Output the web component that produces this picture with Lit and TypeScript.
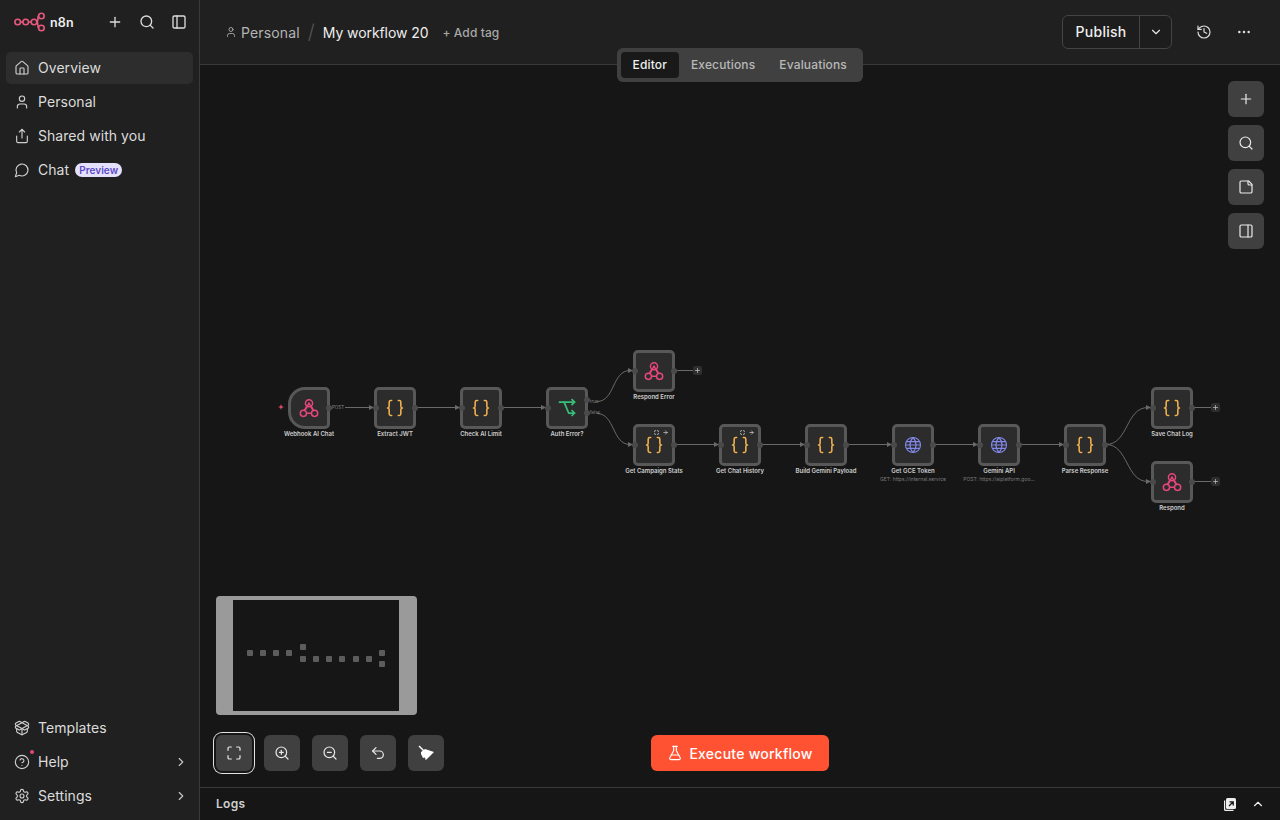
import { LitElement, html, css, svg, nothing } from "lit";
import { customElement } from "lit/decorators.js";

const I: Record<string, unknown> = {
  house: svg`<path d="M15 21v-8a1 1 0 0 0-1-1h-4a1 1 0 0 0-1 1v8"/><path d="M3 10a2 2 0 0 1 .709-1.528l7-5.999a2 2 0 0 1 2.582 0l7 5.999A2 2 0 0 1 21 10v9a2 2 0 0 1-2 2H5a2 2 0 0 1-2-2z"/>`,
  user: svg`<path d="M19 21v-2a4 4 0 0 0-4-4H9a4 4 0 0 0-4 4v2"/><circle cx="12" cy="7" r="4"/>`,
  share: svg`<path d="M12 2v13"/><path d="m16 6-4-4-4 4"/><path d="M4 12v8a2 2 0 0 0 2 2h12a2 2 0 0 0 2-2v-8"/>`,
  chat: svg`<path d="M7.9 20A9 9 0 1 0 4 16.1L2 22Z"/>`,
  pkg: svg`<path d="M12 22v-9"/><path d="M15.17 2.21a1.67 1.67 0 0 1 1.63 0L21 4.57a1.93 1.93 0 0 1 0 3.36L8.82 14.79a1.655 1.655 0 0 1-1.64 0L3 12.43a1.93 1.93 0 0 1 0-3.36z"/><path d="M20 13v3.87a2.06 2.06 0 0 1-1.11 1.83l-6 3.08a1.93 1.93 0 0 1-1.78 0l-6-3.08A2.06 2.06 0 0 1 4 16.87V13"/><path d="M21 12.43a1.93 1.93 0 0 0 0-3.36L8.83 2.2a1.64 1.64 0 0 0-1.63 0L3 4.57a1.93 1.93 0 0 0 0 3.36l12.18 6.86a1.636 1.636 0 0 0 1.63 0z"/>`,
  help: svg`<circle cx="12" cy="12" r="10"/><path d="M9.09 9a3 3 0 0 1 5.83 1c0 2-3 3-3 3"/><path d="M12 17h.01"/>`,
  gear: svg`<path d="M12.22 2h-.44a2 2 0 0 0-2 2v.18a2 2 0 0 1-1 1.73l-.43.25a2 2 0 0 1-2 0l-.15-.08a2 2 0 0 0-2.73.73l-.22.38a2 2 0 0 0 .73 2.73l.15.1a2 2 0 0 1 1 1.72v.51a2 2 0 0 1-1 1.74l-.15.09a2 2 0 0 0-.73 2.73l.22.38a2 2 0 0 0 2.73.73l.15-.08a2 2 0 0 1 2 0l.43.25a2 2 0 0 1 1 1.73V20a2 2 0 0 0 2 2h.44a2 2 0 0 0 2-2v-.18a2 2 0 0 1 1-1.73l.43-.25a2 2 0 0 1 2 0l.15.08a2 2 0 0 0 2.73-.73l.22-.39a2 2 0 0 0-.73-2.73l-.15-.08a2 2 0 0 1-1-1.74v-.5a2 2 0 0 1 1-1.74l.15-.09a2 2 0 0 0 .73-2.73l-.22-.38a2 2 0 0 0-2.73-.73l-.15.08a2 2 0 0 1-2 0l-.43-.25a2 2 0 0 1-1-1.73V4a2 2 0 0 0-2-2z"/><circle cx="12" cy="12" r="3"/>`,
  plus: svg`<path d="M5 12h14"/><path d="M12 5v14"/>`,
  search: svg`<circle cx="11" cy="11" r="8"/><path d="m21 21-4.3-4.3"/>`,
  pleft: svg`<rect width="18" height="18" x="3" y="3" rx="2"/><path d="M9 3v18"/>`,
  pright: svg`<rect width="18" height="18" x="3" y="3" rx="2"/><path d="M15 3v18"/>`,
  cright: svg`<path d="m9 18 6-6-6-6"/>`,
  cdown: svg`<path d="m6 9 6 6 6-6"/>`,
  cup: svg`<path d="m18 15-6-6-6 6"/>`,
  dots: svg`<circle cx="12" cy="12" r="1"/><circle cx="19" cy="12" r="1"/><circle cx="5" cy="12" r="1"/>`,
  history: svg`<path d="M3 12a9 9 0 1 0 9-9 9.75 9.75 0 0 0-6.74 2.74L3 8"/><path d="M3 3v5h5"/><path d="M12 7v5l4 2"/>`,
  note: svg`<path d="M16 3H5a2 2 0 0 0-2 2v14a2 2 0 0 0 2 2h14a2 2 0 0 0 2-2V8Z"/><path d="M15 3v4a2 2 0 0 0 2 2h4"/>`,
  fit: svg`<path d="M8 3H5a2 2 0 0 0-2 2v3"/><path d="M21 8V5a2 2 0 0 0-2-2h-3"/><path d="M3 16v3a2 2 0 0 0 2 2h3"/><path d="M16 21h3a2 2 0 0 0 2-2v-3"/>`,
  arrow: svg`<path d="M4 12h16"/><path d="m12 4 8 8-8 8"/>`,
  zin: svg`<circle cx="11" cy="11" r="8"/><path d="m21 21-4.3-4.3"/><path d="M11 8v6"/><path d="M8 11h6"/>`,
  zout: svg`<circle cx="11" cy="11" r="8"/><path d="m21 21-4.3-4.3"/><path d="M8 11h6"/>`,
  undo: svg`<path d="M9 14 4 9l5-5"/><path d="M4 9h10.5a5.5 5.5 0 0 1 5.5 5.5a5.5 5.5 0 0 1-5.5 5.5H11"/>`,
  flask: svg`<path d="M14 2v6a2 2 0 0 0 .245.96l5.51 10.08A2 2 0 0 1 18 22H6a2 2 0 0 1-1.755-2.96l5.51-10.08A2 2 0 0 0 10 8V2"/><path d="M6.453 15h11.094"/><path d="M8.5 2h7"/>`,
  webhook: svg`<circle cx="12" cy="6.8" r="3.9"/><circle cx="5.9" cy="17.8" r="3.4"/><circle cx="18.1" cy="17.8" r="3.4"/><path d="M9.7 10 6.800 14.800"/><path d="M14.300 10l2.900 4.800"/><path d="M9.500 17.800h5"/><path d="M12 6.800 8.200 13.500"/><path d="M12 6.800l3.800 6.700"/>`,
  code: svg`<path d="M8 3H7a2 2 0 0 0-2 2v5a2 2 0 0 1-2 2 2 2 0 0 1 2 2v5c0 1.100.9 2 2 2h1"/><path d="M16 21h1a2 2 0 0 0 2-2v-5c0-1.100.9-2 2-2a2 2 0 0 1-2-2V5a2 2 0 0 0-2-2h-1"/>`,
  globe: svg`<circle cx="12" cy="12" r="10"/><path d="M12 2a14.500 14.500 0 0 0 0 20 14.500 14.500 0 0 0 0-20"/><path d="M2 12h20"/><path d="M3.500 7.500h17"/><path d="M3.500 16.500h17"/>`,
  iff: svg`<path d="M3 5H21"/><path d="M8.500 5 14 18h7"/><path d="m18 2 3 3-3 3"/><path d="m18 15 3 3-3 3"/>`,
};

const icon = (name: string, cls = "") =>
  html`<svg class="ic ${cls}" viewBox="0 0 24 24" fill="none" stroke="currentColor" stroke-linecap="round" stroke-linejoin="round">${I[name]}</svg>`;

type Kind = "webhook" | "code" | "globe" | "iff";
interface N {
  x: number; y: number; kind: Kind; label: string; sub?: string;
  trigger?: boolean; badges?: boolean; add?: boolean;
}
// Canvas coordinates: origin at the canvas top-left (200, 65)
const NODES: N[] = [
  { x: 88, y: 322, kind: "webhook", label: "Webhook AI Chat", trigger: true },
  { x: 174, y: 322, kind: "code", label: "Extract JWT" },
  { x: 260, y: 322, kind: "code", label: "Check AI Limit" },
  { x: 346, y: 322, kind: "iff", label: "Auth Error?" },
  { x: 433, y: 285, kind: "webhook", label: "Respond Error", add: true },
  { x: 433, y: 359, kind: "code", label: "Get Campaign Stats", badges: true },
  { x: 519, y: 359, kind: "code", label: "Get Chat History", badges: true },
  { x: 605, y: 359, kind: "code", label: "Build Gemini Payload" },
  { x: 692, y: 359, kind: "globe", label: "Get GCE Token", sub: "GET: https://internal.service" },
  { x: 778, y: 359, kind: "globe", label: "Gemini API", sub: "POST: https://aiplatform.goo..." },
  { x: 864, y: 359, kind: "code", label: "Parse Response" },
  { x: 951, y: 322, kind: "code", label: "Save Chat Log", add: true },
  { x: 951, y: 396, kind: "webhook", label: "Respond", add: true },
];

const W = 42;
const seg = (x1: number, y1: number, x2: number, y2: number) => {
  const d = (x2 - x1) * 0.5;
  return y1 === y2
    ? `M${x1} ${y1}H${x2 - 3}`
    : `M${x1} ${y1}C${x1 + d} ${y1} ${x2 - d - 3} ${y2} ${x2 - 3} ${y2}`;
};
// [from x, from y, to x, to y], values are port centres
const EDGES: number[][] = [
  [145, 342.5, 174, 342.5],
  [216, 342.5, 260, 342.5],
  [302, 342.5, 346, 342.5],
  [397, 336.5, 433, 305.5],
  [397, 348.5, 433, 379.5],
  [475, 379.5, 519, 379.5],
  [561, 379.5, 605, 379.5],
  [647, 379.5, 692, 379.5],
  [734, 379.5, 778, 379.5],
  [820, 379.5, 864, 379.5],
  [906, 379.5, 951, 342.5],
  [906, 379.5, 951, 416.5],
];

// Minimap dots: screen position of each dot's top-left corner
const MINI: number[][] = [
  [247, 650], [260, 650], [273, 650], [286, 650], [300, 644], [300, 656], [313, 656], [326, 656],
  [339, 656], [353, 656], [366, 656], [379, 650], [379, 661],
];

@customElement("app-root")
export class AppRoot extends LitElement {
  static styles = css`
    :host { display: block; width: 1280px; height: 820px; overflow: hidden; background: #161616; font-family: Inter, "Noto Sans", sans-serif; color: #e4e4e4; }
    * { box-sizing: border-box; }
    .ic { width: 16px; height: 16px; stroke-width: 2; flex: none; display: block; }
    .app { display: grid; grid-template-columns: 200px 1fr; height: 820px; }
    .t { margin-top: -2px; }

    .side { background: #202020; border-right: 1px solid #3a3a3a; display: flex; flex-direction: column; padding: 0 6px; }
    .brand { display: flex; align-items: center; height: 44px; padding: 0 6px 0 8px; margin-bottom: 8px; }
    .logo { width: 31px; height: 20px; flex: none; }
    .brand b { font-size: 12.5px; font-weight: 600; margin-left: 5px; color: #eee; letter-spacing: 0.2px; }
    .brand .tools { margin-left: auto; display: flex; gap: 16px; color: #dcdcdc; }
    .nav { display: flex; flex-direction: column; gap: 2px; }
    .item { display: flex; align-items: center; height: 32px; padding: 0 8px; border-radius: 5px; font-size: 14px; color: #dcdcdc; gap: 8px; letter-spacing: 0.05px; position: relative; }
    .item.on { background: #2d2d2d; }
    .item .ic { stroke-width: 1.7; color: #cfcfcf; }
    .item .chev { margin-left: auto; width: 14px; height: 14px; margin-right: -3px; color: #c4c4c4; stroke-width: 2; }
    .pv { font-size: 10px; font-weight: 600; background: #e6e1fb; color: #5b4bc4; border-radius: 7px; padding: 0 4px; line-height: 14px; height: 14px; margin-left: -2px; letter-spacing: 0.05px; }
    .dot { position: absolute; left: 24px; top: 4px; width: 4px; height: 4px; border-radius: 50%; background: #e8466f; }
    .spacer { flex: 1; }
    .nav.bottom { padding-bottom: 8px; }

    .main { display: flex; flex-direction: column; min-width: 0; position: relative; }
    .head { height: 65px; flex: none; background: #202020; border-bottom: 1px solid #3a3a3a; display: flex; align-items: center; padding: 0 28px 0 25px; }
    .crumb { display: flex; align-items: center; font-size: 14px; color: #b4b4b4; gap: 4px; letter-spacing: 0.15px; }
    .crumb .ic { width: 12px; height: 12px; stroke-width: 1.7; }
    .slash { color: #555; font-size: 20px; font-weight: 300; margin: 0 8px; }
    .wf { font-size: 14px; color: #eee; letter-spacing: -0.08px; }
    .tag { font-size: 12px; font-weight: 500; color: #a8a8a8; margin-left: 14px; letter-spacing: 0.1px; }
    .right { margin-left: auto; display: flex; align-items: center; }
    .pub { display: flex; height: 34px; border: 1px solid #444; border-radius: 6px; background: #1d1d1d; }
    .pub span { width: 77px; text-align: center; font-size: 14px; font-weight: 500; line-height: 32px; color: #eee; border-right: 1px solid #444; letter-spacing: 0.25px; }
    .pub div { width: 31px; display: flex; align-items: center; justify-content: center; }
    .pub .ic { width: 14px; height: 14px; }
    .right > .ic { color: #dcdcdc; width: 16px; height: 16px; stroke-width: 1.8; }
    .hist { margin-left: 24px; }
    .more { margin-left: 24px; }

    .tabs { position: absolute; left: 416.5px; top: 48px; height: 34px; background: #404040; border-radius: 6px; display: flex; align-items: center; padding: 4px; font-size: 12px; font-weight: 500; color: #b8b8b8; letter-spacing: 0.15px; z-index: 3; }
    .tabs span { padding: 0 12px; line-height: 26px; border-radius: 4px; }
    .tabs .on { background: #191919; color: #f0f0f0; }

    .canvas { flex: 1; position: relative; background: #161616; overflow: hidden; }
    .wires { position: absolute; left: 0; top: 0; width: 1080px; height: 722px; }
    .wires path { fill: none; stroke: #6a6a6a; stroke-width: 1; }
    .wires .arrow { fill: #6a6a6a; stroke: none; }

    .node { position: absolute; width: 42px; height: 42px; background: #2c2c2c; border: 3px solid #585858; border-radius: 5px; display: flex; align-items: center; justify-content: center; }
    .node.trig { border-radius: 17px 5px 5px 17px; }
    .node .ic { width: 20px; height: 20px; stroke-width: 1.9; }
    .node .webhook { width: 22px; height: 22px; color: #e8467c; stroke-width: 1.6; }
    .node .code { color: #f0b04e; }
    .node .globe { width: 18px; height: 18px; color: #8288ea; stroke-width: 1.5; }
    .node .iff { color: #35c07a; stroke-width: 2.1; }
    .port { position: absolute; width: 6px; height: 6px; border-radius: 50%; background: #4a4a4a; }
    .port.in { left: -4.5px; top: 14.5px; }
    .port.out { right: -4.5px; top: 14.5px; }
    .port.t { top: 8.7px; }
    .port.f { top: 20.3px; }
    .cap { position: absolute; left: -33px; width: 102px; top: 39px; text-align: center; font-size: 6px; font-weight: 600; color: #cfcfcf; line-height: 9px; white-space: nowrap; }
    .sub { display: block; font-size: 5px; font-weight: 400; color: #7c7c7c; line-height: 9px; }
    .bdg { position: absolute; right: 4px; top: 3px; display: flex; gap: 4px; color: #e4e4e4; }
    .node .bdg .ic { width: 5px; height: 5px; stroke-width: 3; color: #e4e4e4; }
    .elabel { position: absolute; font-size: 4.5px; color: #888; line-height: 6px; }
    .addb { position: absolute; width: 9px; height: 9px; border-radius: 2px; background: #2e2e2e; color: #bdbdbd; display: flex; align-items: center; justify-content: center; }
    .addb .ic { width: 7px; height: 7px; stroke-width: 2.6; }
    .bolt { position: absolute; color: #ef4d63; left: -13.5px; top: 14.3px; width: 6px; height: 6px; }

    .rail { position: absolute; right: 16px; top: 16px; display: flex; flex-direction: column; gap: 8px; }
    .btn { width: 36px; height: 36px; background: #404040; border-radius: 6px; display: flex; align-items: center; justify-content: center; color: #eaeaea; }
    .btn .ic { stroke-width: 1.8; }

    .mini { position: absolute; left: 16px; top: 531px; width: 200.5px; height: 119px; background: #9a9a9a; border-radius: 4px; overflow: hidden; }
    .mini i { position: absolute; left: 17px; top: 4px; width: 166px; height: 111px; background: #161616; display: block; }
    .mini b { position: absolute; width: 6px; height: 6px; background: #5c5c5c; border-radius: 1px; }

    .tools2 { position: absolute; left: 16px; top: 670px; display: flex; gap: 12px; }
    .btn.fitb { box-shadow: 0 0 0 2px #161616, 0 0 0 3px #e2e2e2; border-radius: 6px; }
    .broom { width: 18px; height: 18px; display: block; }

    .exec { position: absolute; left: 451px; top: 670px; height: 36px; width: 178px; background: #ff5233; border-radius: 6px; color: #fff; display: flex; align-items: center; justify-content: center; gap: 6px; font-size: 14px; font-weight: 500; letter-spacing: 0.25px; }
    .exec .ic { stroke-width: 1.7; }

    .logs { height: 33px; flex: none; background: #161616; border-top: 1px solid #3a3a3a; display: flex; align-items: center; padding: 0 15px 0 16px; font-size: 12px; font-weight: 600; color: #cfcfcf; letter-spacing: 0.3px; }
    .logs .acts { margin-left: auto; display: flex; gap: 14px; align-items: center; color: #eee; }
    .pop { width: 14px; height: 14px; display: block; }
    .logs .ic { width: 14px; height: 14px; }
  `;

  private side() {
    return html`<aside class="side">
      <div class="brand">
        <svg class="logo" viewBox="0 0 31 20" fill="none" stroke="#e8587e" stroke-width="1.6">
          <circle cx="3.7" cy="10" r="2.8"/><circle cx="11.7" cy="10" r="2.8"/><circle cx="20" cy="10" r="2.8"/>
          <circle cx="27.4" cy="4" r="2.8"/><circle cx="27.4" cy="16" r="2.8"/>
          <path d="M6.5 10h2.400M14.500 10h2.700M22.800 10c2 0 .3-6 1.800-6M22.800 10c2 0 .3 6 1.800 6"/>
        </svg>
        <b>n8n</b>
        <div class="tools">${icon("plus")}${icon("search")}${icon("pleft")}</div>
      </div>
      <nav class="nav">
        <div class="item on">${icon("house")}<span class="t">Overview</span></div>
        <div class="item">${icon("user")}<span class="t">Personal</span></div>
        <div class="item">${icon("share")}<span class="t">Shared with you</span></div>
        <div class="item">${icon("chat")}<span class="t">Chat</span> <span class="pv">Preview</span></div>
      </nav>
      <div class="spacer"></div>
      <nav class="nav bottom">
        <div class="item">${icon("pkg")}<span class="t">Templates</span></div>
        <div class="item">${icon("help")}<span class="t">Help</span><span class="dot"></span>${icon("cright", "chev")}</div>
        <div class="item">${icon("gear")}<span class="t">Settings</span>${icon("cright", "chev")}</div>
      </nav>
    </aside>`;
  }

  private node(n: N) {
    return html`<div class="node ${n.trigger ? "trig" : ""}" style="left:${n.x}px;top:${n.y}px">
      ${n.trigger
        ? html`<svg class="bolt" viewBox="0 0 10 10"><path fill="currentColor" d="M5 0l1.200 3.800L10 5 6.200 6.200 5 10 3.800 6.200 0 5l3.800-1.200z"/></svg>`
        : html`<span class="port in"></span>`}
      ${icon(n.kind, n.kind)}
      ${n.kind === "iff"
        ? html`<span class="port out t"></span><span class="port out f"></span>`
        : html`<span class="port out"></span>`}
      ${n.badges ? html`<span class="bdg">${icon("fit")}${icon("arrow")}</span>` : nothing}
      <div class="cap">${n.label}${n.sub ? html`<span class="sub">${n.sub}</span>` : nothing}</div>
    </div>`;
  }

  private canvas() {
    const addX = NODES.filter((n) => n.add);
    return html`<div class="canvas">
      <svg class="wires" viewBox="0 0 1080 722">
        ${EDGES.map(([a, b, c, d]) => svg`<path d=${seg(a, b, c, d)}/><polygon class="arrow" points="${c - 5},${d - 2.5} ${c},${d} ${c - 5},${d + 2.5}"/>`)}
        ${addX.map((n) => svg`<path d="M${n.x + W} ${n.y + 20.5}H${n.x + W + 19}"/>`)}
      </svg>
      ${NODES.map((n) => this.node(n))}
      ${addX.map((n) => html`<div class="addb" style="left:${n.x + W + 18}px;top:${n.y + 16}px">${icon("plus")}</div>`)}
      <span class="elabel" style="left:132px;top:339.5px">POST</span>
      <span class="elabel" style="left:390px;top:333.5px">true</span>
      <span class="elabel" style="left:390px;top:345px">false</span>

      <div class="rail">
        <div class="btn">${icon("plus")}</div>
        <div class="btn">${icon("search")}</div>
        <div class="btn">${icon("note")}</div>
        <div class="btn">${icon("pright")}</div>
      </div>

      <div class="mini"><i></i>${MINI.map(([x, y]) => html`<b style="left:${x - 216}px;top:${y - 596}px"></b>`)}</div>

      <div class="tools2">
        <div class="btn fitb">${icon("fit")}</div>
        <div class="btn">${icon("zin")}</div>
        <div class="btn">${icon("zout")}</div>
        <div class="btn">${icon("undo")}</div>
        <div class="btn"><svg class="broom" viewBox="0 0 18 18" fill="#fff" stroke="none">
          <path d="M1.500 2.500l1-1 5 5-1 1z"/>
          <path d="M4 8 8 5l9 3-4 4-4.300 4.300L8 13.500 6 14 4 10z"/>
        </svg></div>
      </div>

      <div class="exec">${icon("flask")}Execute workflow</div>
    </div>`;
  }

  render() {
    return html`<div class="app">
      ${this.side()}
      <div class="main">
        <header class="head">
          <div class="crumb">${icon("user")}Personal</div>
          <span class="slash">/</span>
          <span class="wf">My workflow 20</span>
          <span class="tag">+ Add tag</span>
          <div class="right">
            <div class="pub"><span>Publish</span><div>${icon("cdown")}</div></div>
            ${icon("history", "hist")}
            ${icon("dots", "more")}
          </div>
        </header>
        <div class="tabs"><span class="on">Editor</span><span>Executions</span><span>Evaluations</span></div>
        ${this.canvas()}
        <footer class="logs"><span class="t">Logs</span>
          <div class="acts">
            <svg class="pop" viewBox="0 0 14 14">
              <path fill="#eee" d="M1 3.500h1.200V12q0 .8 .8 .8h7.500V14H2.500Q1 14 1 12.500z"/>
              <rect x="3" y="1" width="10" height="11" rx="1.500" fill="#eee"/>
              <path d="M6 9l4-4M6.500 4.800H10.200V8.500" fill="none" stroke="#161616" stroke-width="1.300"/>
            </svg>
            ${icon("cup")}
          </div>
        </footer>
      </div>
    </div>`;
  }
}
